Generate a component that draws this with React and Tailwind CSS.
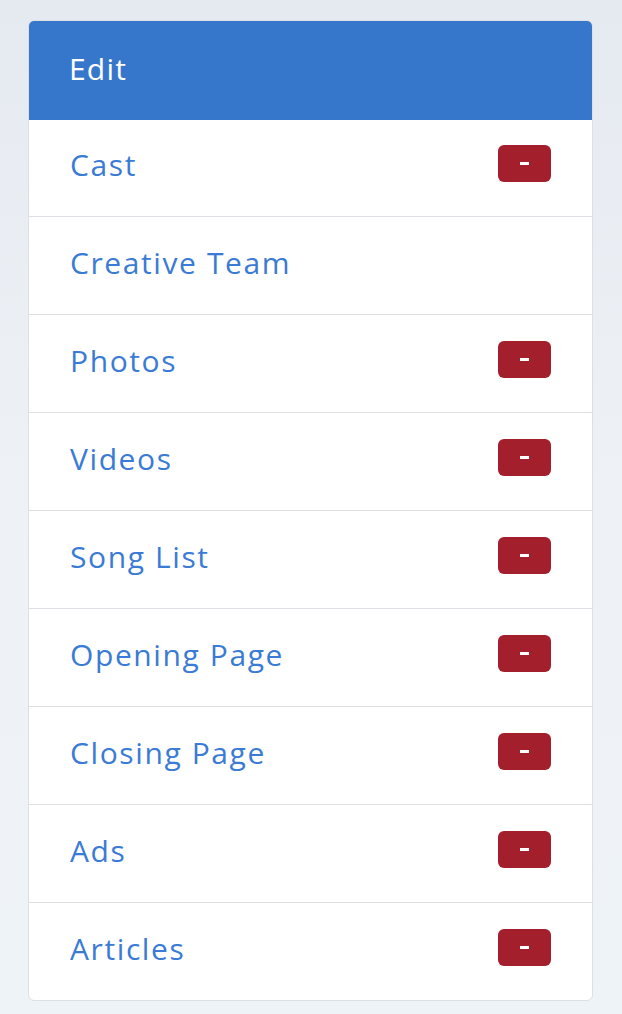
import React from 'react';

const items = [
    { name: 'Cast', badge: true },
    { name: 'Creative Team', badge: false },
    { name: 'Photos', badge: true },
    { name: 'Videos', badge: true },
    { name: 'Song List', badge: true },
    { name: 'Opening Page', badge: true },
    { name: 'Closing Page', badge: true },
    { name: 'Ads', badge: true },
    { name: 'Articles', badge: true },
];

const App = () => {
    return (
        <div
            className="min-h-[1014px] w-full bg-gradient-to-b from-[#e5eaf0] via-[#eef2f7] to-[#eef3f8] pt-5 pl-7 pr-[29px] pb-3"
            style={{ fontFamily: '"Open Sans", "Noto Sans", sans-serif' }}
        >
            <div className="rounded-md border border-[#dcdfe3] bg-white overflow-hidden">
                {/* Header */}
                <div className="h-[100px] bg-[#3677cc] flex items-center px-[41px] -mx-px -mt-px">
                    <span className="text-[30px] leading-none text-white tracking-[1.2px] pb-[3px]">Edit</span>
                </div>

                {/* Rows */}
                {items.map((item, i) => (
                    <div
                        key={item.name}
                        className={`flex items-center justify-between pl-[41px] pr-[41px] ${i > 0 ? 'h-[98px] border-t border-[#dcdfe3]' : 'h-[96px]'}`}
                    >
                        <span className="text-[30px] leading-none text-[#3a7bd5] tracking-[1.6px] pb-[6px]">{item.name}</span>
                        {item.badge && (
                            <span className="w-[53px] h-[37px] mb-[9px] rounded-md bg-[#a31f2b] flex items-center justify-center">
                                <span className="block w-[9px] h-[3px] bg-white"></span>
                            </span>
                        )}
                    </div>
                ))}
            </div>
        </div>
    );
};

export default App;
